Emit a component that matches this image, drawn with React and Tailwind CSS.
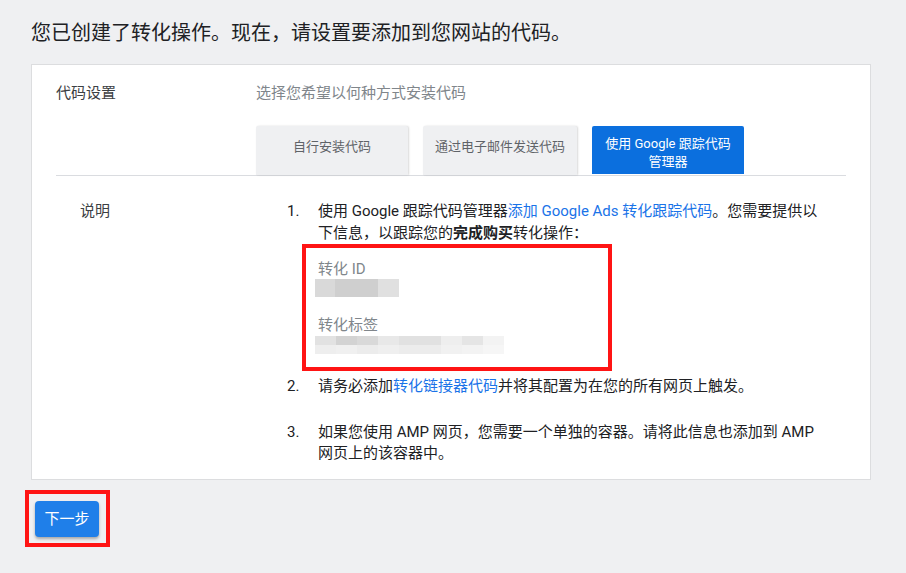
import React from "react";

const font = { fontFamily: '"Roboto", "Noto Sans CJK SC", sans-serif' };

function Blur1() {
  return (
    <div className="flex h-[18px] w-[84px] mt-[-1px] ml-[-3px]">
      <div className="w-[20px] bg-[#d9d9d9]" />
      <div className="w-[43px] bg-[#cfcfcf]" />
      <div className="w-[21px] bg-[#e0e0e0]" />
    </div>
  );
}

function Blur2() {
  const top = ["#e2e2e2", "#d3d3d3", "#d9d9d9", "#e8e8e8", "#e1e1e1", "#e1e1e1", "#eeeeee", "#e5e5e5", "#f3f3f3"];
  const bot = ["#eeeeee", "#f0f0f0", "#ececec", "#efefef", "#ececec", "#ececec", "#f1f1f1", "#f3f3f3", "#f6f6f6"];
  return (
    <div className="flex flex-col w-[189px] h-[18px] ml-[-3px]">
      <div className="flex h-[9px]">
        {top.map((c, i) => (
          <div key={i} className="flex-1" style={{ background: c }} />
        ))}
      </div>
      <div className="flex h-[9px]">
        {bot.map((c, i) => (
          <div key={i} className="flex-1" style={{ background: c }} />
        ))}
      </div>
    </div>
  );
}

export default function App() {
  return (
    <div className="min-h-[573px] w-[906px] bg-[#eff0f2] pl-[31px] pt-[19px] text-[#202124]" style={font}>
      <h1 className="text-[20px] leading-[28px] font-normal text-[#202124]">
        您已创建了转化操作。现在，请设置要添加到您网站的代码。
      </h1>

      <div className="mt-[17px] w-[840px] border border-[#dcdddf] bg-white px-6">
        <div className="flex pt-[17px] text-[15px] leading-[22px]">
          <div className="w-[200px] text-[#3c4043]">代码设置</div>
          <div className="text-[#80868b]">选择您希望以何种方式安装代码</div>
        </div>

        <div className="mt-[22px] flex border-b border-[#dadce0] pl-[200px]">
          <div className="flex h-[49px] w-[152px] justify-center rounded-t-[2px] bg-[#eff0f2] pt-[12px] text-[13px] leading-[18px] text-[#5f6368] shadow-[1px_0_2px_rgba(0,0,0,0.15)]">
            自行安装代码
          </div>
          <div className="ml-[15px] flex h-[49px] w-[154px] justify-center rounded-t-[2px] bg-[#eff0f2] pt-[12px] text-[13px] leading-[18px] text-[#5f6368] shadow-[1px_0_2px_rgba(0,0,0,0.15)]">
            通过电子邮件发送代码
          </div>
          <div className="ml-[15px] h-[48px] w-[152px] rounded-t-[2px] bg-[#0b6fde] pt-[9px] text-center text-[13px] leading-[18px] text-white">
            使用 Google 跟踪代码
            <br />
            管理器
          </div>
        </div>

        <div className="flex pb-[15px] pl-6 pt-[24px] text-[15px] leading-[22px]">
          <div className="w-[207px] text-[#3c4043]">说明</div>
          <ol className="w-[543px] text-[#202124]">
            <li className="flex">
              <span className="w-[31px] shrink-0">1.</span>
              <div className="w-[512px]">
                <p>
                  使用 Google 跟踪代码管理器<span className="text-[#1a73e8]">添加 Google Ads 转化跟踪代码</span>。您需要提供以下信息，以跟踪您的<span className="font-bold">完成购买</span>转化操作：
                </p>
                <div className="ml-[-16px] w-[310px] border-[4px] border-[#ff1414] pb-[13px] pl-[12px] pt-[10px]">
                  <div className="text-[#80868b]">转化 ID</div>
                  <Blur1 />
                  <div className="mt-[17px] text-[#80868b]">转化标签</div>
                  <Blur2 />
                </div>
              </div>
            </li>
            <li className="mt-[4px] flex">
              <span className="w-[31px] shrink-0">2.</span>
              <p className="w-[512px]">
                请务必添加<span className="text-[#1a73e8]">转化链接器代码</span>并将其配置为在您的所有网页上触发。
              </p>
            </li>
            <li className="mt-[25px] flex leading-[21px]">
              <span className="w-[31px] shrink-0">3.</span>
              <p className="w-[512px]">
                如果您使用 AMP 网页，您需要一个单独的容器。请将此信息也添加到 AMP 网页上的该容器中。
              </p>
            </li>
          </ol>
        </div>
      </div>

      <div className="ml-[-6px] mt-[10px] w-[85px] border-[4px] border-[#ff1414] pb-[6px] pl-[6px] pr-[7px] pt-[7px]">
        <button className="flex h-[36px] w-[64px] items-center justify-center rounded-[4px] bg-[#1f7fe9] text-[15px] text-white shadow-[0_2px_3px_rgba(0,0,0,0.3)]">
          下一步
        </button>
      </div>
    </div>
  );
}
